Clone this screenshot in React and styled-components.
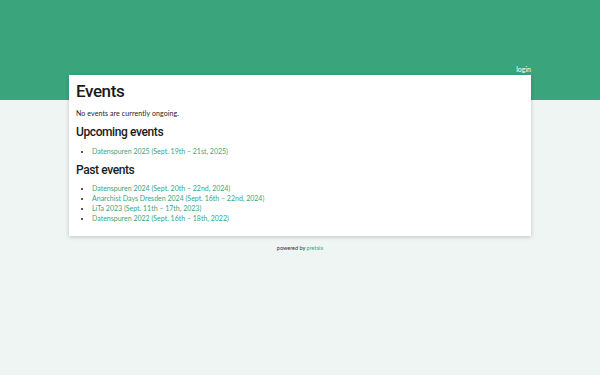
import React from "react";
import styled, { createGlobalStyle } from "styled-components";

const Global = createGlobalStyle`
  html, body { margin: 0; padding: 0; background: #eff5f3; }
  body { font-family: "Lato", "Noto Sans", sans-serif; color: #222; }
`;

const Header = styled.header`
  background: #3aa57c;
  height: 100px;
  display: flex;
  justify-content: center;
  align-items: flex-end;
`;

const HeaderInner = styled.div`
  width: 462px;
  display: flex;
  justify-content: flex-end;
  padding-bottom: 27px;
`;

const Login = styled.a`
  color: #fff;
  font-size: 7px;
  line-height: 8px;
  text-decoration: none;
`;

const Main = styled.main`
  display: flex;
  justify-content: center;
  margin-top: -25px;
`;

const Card = styled.section`
  width: 448px;
  background: #fff;
  padding: 4px 7px 13px;
  box-shadow: 0 1px 4px rgba(0, 0, 0, 0.2);
`;

const Title = styled.h1`
  font-family: "Roboto", "Noto Sans", sans-serif;
  font-weight: 500;
  font-size: 17px;
  line-height: 24px;
  margin: 0 0 4px;
  letter-spacing: -0.4px;
  color: #1a1a1a;
`;

const Para = styled.p`
  font-size: 7px;
  line-height: 12px;
  letter-spacing: 0.1px;
  margin: 0 0 5px;
`;

const SubTitle = styled.h2`
  font-family: "Roboto", "Noto Sans", sans-serif;
  font-weight: 500;
  font-size: 12px;
  line-height: 16px;
  letter-spacing: -0.4px;
  margin: 0 0 ${(p) => p.$gap}px;
  color: #1a1a1a;
`;

const List = styled.ul`
  margin: 0 0 ${(p) => p.$after}px;
  padding-left: 16px;
  font-size: 7px;
  line-height: 10px;
`;

const Item = styled.li``;

const Link = styled.a`
  color: #3aa57c;
  text-decoration: none;
`;

const Footer = styled.footer`
  text-align: center;
  font-size: 5.5px;
  line-height: 8px;
  color: #333;
  padding-top: 8px;
`;

const upcoming = ["Datenspuren 2025 (Sept. 19th – 21st, 2025)"];
const past = [
  "Datenspuren 2024 (Sept. 20th – 22nd, 2024)",
  "Anarchist Days Dresden 2024 (Sept. 16th – 22nd, 2024)",
  "LiTa 2023 (Sept. 11th – 17th, 2023)",
  "Datenspuren 2022 (Sept. 16th – 18th, 2022)",
];

export default function App() {
  return (
    <>
      <Global />
      <Header>
        <HeaderInner>
          <Login href="#">login</Login>
        </HeaderInner>
      </Header>
      <Main>
        <Card>
          <Title>Events</Title>
          <Para>No events are currently ongoing.</Para>
          <SubTitle $gap={6}>Upcoming events</SubTitle>
          <List $after={6}>
            {upcoming.map((e) => (
              <Item key={e}>
                <Link href="#">{e}</Link>
              </Item>
            ))}
          </List>
          <SubTitle $gap={5}>Past events</SubTitle>
          <List $after={0}>
            {past.map((e) => (
              <Item key={e}>
                <Link href="#">{e}</Link>
              </Item>
            ))}
          </List>
        </Card>
      </Main>
      <Footer>
        powered by <Link href="#">pretalx</Link>
      </Footer>
    </>
  );
}
